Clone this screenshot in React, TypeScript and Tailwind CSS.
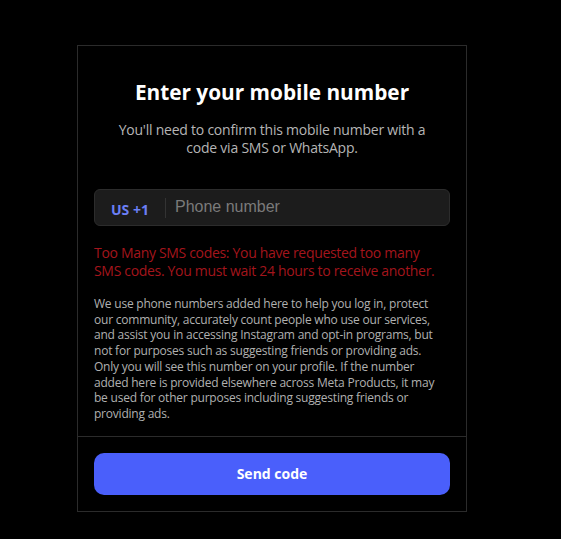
export default function App() {
  return (
    <div className="min-h-[539px] bg-black pt-[45px] font-['Open_Sans',sans-serif]">
      <div className="ml-[77px] w-[390px] border border-[#2b2b2b] bg-black">
        <div className="px-4 pt-[32px]">
          <h1 className="text-center text-[20.8px] font-bold leading-[28px] text-white">Enter your mobile number</h1>
          <p className="mx-auto mt-[15px] w-[330px] text-center text-[14px] leading-[18px] tracking-[-0.23px] text-[#b5b5b5]">
            You'll need to confirm this mobile number with a code via SMS or WhatsApp.
          </p>
          <div className="mt-[32px] flex h-[37px] items-center rounded-md border border-[#2c2c2c] bg-[#1c1c1c]">
            <span className="pl-4 pr-4 pt-[3px] text-[14px] font-bold text-[#6b7ff5]">US +1</span>
            <span className="h-[20px] w-px bg-[#333]" />
            <input
              placeholder="Phone number"
              className="ml-[9px] flex-1 bg-transparent pb-[2px] font-['Liberation_Sans',sans-serif] text-[16px] text-white outline-none placeholder:text-[#7a7a7a]"
            />
          </div>
          <p className="mt-[18px] whitespace-nowrap text-[14px] leading-[18px] tracking-[-0.32px] text-[#a3151c]">
            Too Many SMS codes: You have requested too many
            <br />
            SMS codes. You must wait 24 hours to receive another.
          </p>
          <p className="mt-[16px] whitespace-nowrap pb-[14px] text-[12px] leading-[15.7px] tracking-[-0.22px] text-[#b0b0b0]">
            We use phone numbers added here to help you log in, protect
            <br />
            our community, accurately count people who use our services,
            <br />
            and assist you in accessing Instagram and opt-in programs, but
            <br />
            not for purposes such as suggesting friends or providing ads.
            <br />
            Only you will see this number on your profile. If the number
            <br />
            added here is provided elsewhere across Meta Products, it may
            <br />
            be used for other purposes including suggesting friends or
            <br />
            providing ads.
          </p>
        </div>
        <div className="border-t border-[#2b2b2b] px-4 pb-[16px] pt-[16px]">
          <button className="h-[42px] w-full rounded-[10px] bg-[#4a5ffb] text-[14px] font-bold text-white">Send code</button>
        </div>
      </div>
    </div>
  );
}
